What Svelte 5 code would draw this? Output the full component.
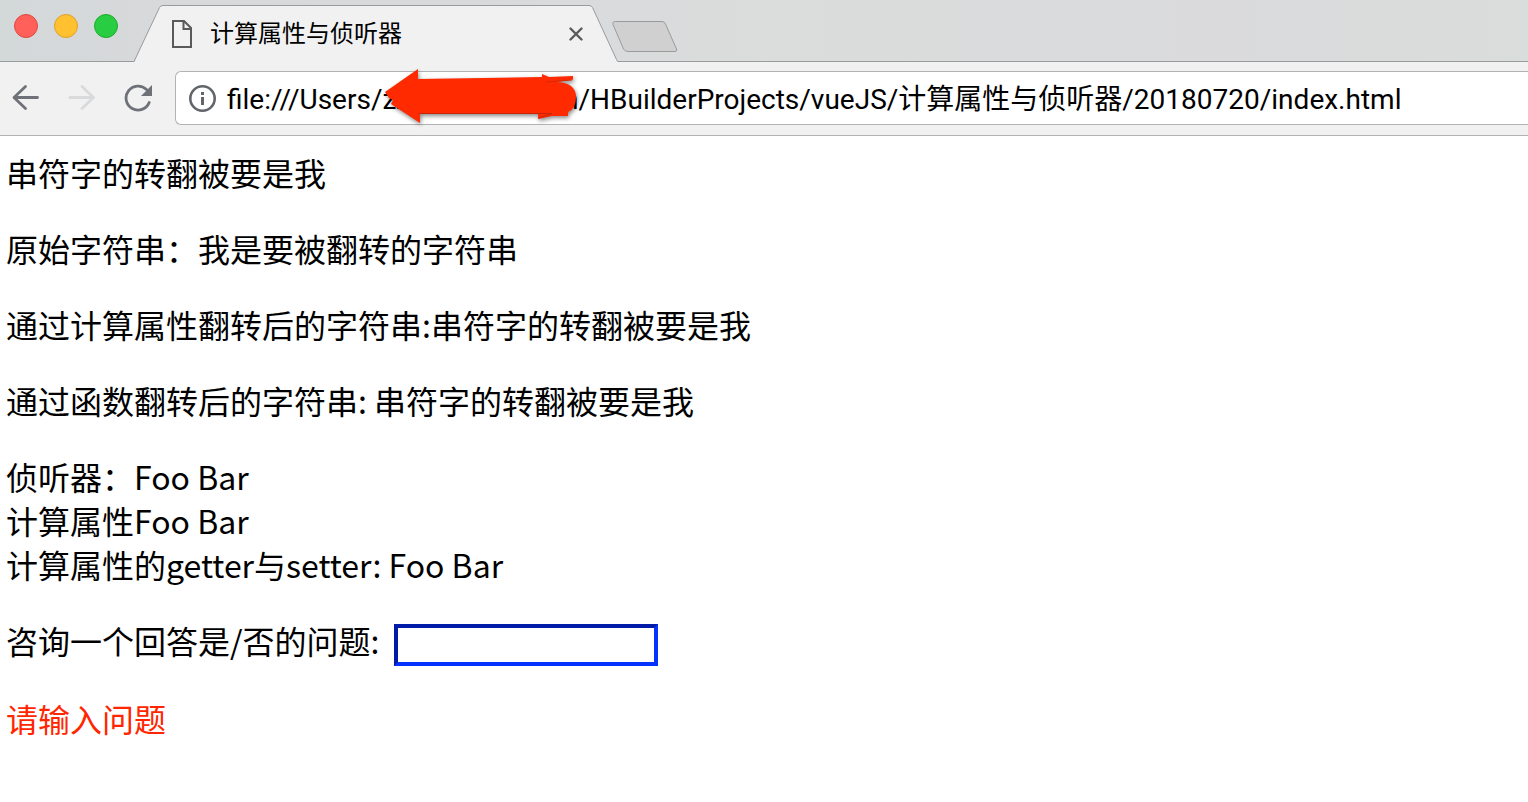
<script>
  let url = 'file:///Users/zxxxxxxxxxxxxn/HBuilderProjects/vueJS/计算属性与侦听器/20180720/index.html'
  let message = '我是要被翻转的字符串'
  let firstName = 'Foo'
  let lastName = 'Bar'
  let question = ''
  let answer = '请输入问题'

  const reverse = (text) => text.split('').reverse().join('')

  $: reversed = reverse(message)
  $: fullName = firstName + ' ' + lastName
</script>

<div class="browser">
  <header class="strip">
    <div class="lights">
      <button class="light close" aria-label="Close window"></button>
      <button class="light minimize" aria-label="Minimize window"></button>
      <button class="light zoom" aria-label="Zoom window"></button>
    </div>
    <div class="tab">
      <svg class="shape" width="484" height="57" viewBox="0 0 484 57" aria-hidden="true">
        <path d="M0 57 L0.5 56.5 L25.5 2.5 Q26.5 0.5 29 0.5 H455 Q457.5 0.5 458.5 2.5 L482.5 54.5 Q483.3 56.5 484 56.5 V57 Z" fill="#f1f1f1" />
        <path d="M0 56.5 L25.5 2.5 Q26.5 0.5 29 0.5 H455 Q457.5 0.5 458.5 2.5 L482.5 54.5 Q483.3 56.5 484 56.5" fill="none" stroke="#999b9d" />
      </svg>
      <svg class="file" width="20" height="28" viewBox="0 0 20 28" aria-hidden="true">
        <path d="M1 1 H12 L19 8 V27 H1 Z M11.5 1 V9 H19" fill="none" stroke="#5a5a5a" stroke-width="2" />
      </svg>
      <span class="title">计算属性与侦听器</span>
      <button class="tab-close" aria-label="Close tab">
        <svg width="14" height="14" viewBox="0 0 14 14">
          <path d="M1.5 1.5 L12.5 12.5 M12.5 1.5 L1.5 12.5" stroke="#5a5b5e" stroke-width="2.4" stroke-linecap="round" />
        </svg>
      </button>
    </div>
    <button class="new-tab" aria-label="New tab">
      <svg width="66" height="32" viewBox="0 0 66 32">
        <path d="M3.5 0.5 H50 Q52.5 0.5 53.5 3 L64.5 28 Q65.5 30.5 63 30.5 H16 Q13 30.5 11.5 28 L1 3.5 Q0 0.5 3.5 0.5 Z" fill="#d0d0d0" stroke="#999b9d" />
      </svg>
    </button>
  </header>

  <nav class="toolbar">
    <button class="nav" aria-label="Back">
      <svg width="28" height="28" viewBox="0 0 28 28">
        <path d="M13.5 2.5 L2 13.5 L13.5 24.5 M2.5 13.5 H25.5" fill="none" stroke="#6e7278" stroke-width="2.8" stroke-linecap="round" stroke-linejoin="round" />
      </svg>
    </button>
    <button class="nav" aria-label="Forward" disabled>
      <svg width="28" height="28" viewBox="0 0 28 28">
        <path d="M14 2.5 L25.5 13.5 L14 24.5 M25 13.5 H2" fill="none" stroke="#d8dadb" stroke-width="2.8" stroke-linecap="round" stroke-linejoin="round" />
      </svg>
    </button>
    <button class="nav" aria-label="Reload">
      <svg width="28" height="28" viewBox="0 0 28 28">
        <path d="M22.5 5.5 A12 12 0 1 0 25.2 18.5" fill="none" stroke="#6e7278" stroke-width="2.8" stroke-linecap="round" />
        <path d="M28 1 V12 H17 Z" fill="#6e7278" />
      </svg>
    </button>
    <div class="address">
      <svg class="info" width="28" height="28" viewBox="0 0 28 28" aria-hidden="true">
        <circle cx="13.5" cy="14.5" r="12.2" fill="none" stroke="#62666b" stroke-width="2.6" />
        <path d="M12 8 H15 V11 H12 Z M12 13 H15 V21 H12 Z" fill="#62666b" />
      </svg>
      <input class="url" type="text" aria-label="Address" spellcheck="false" bind:value={url} />
      <!-- hides the account name in the path -->
      <svg class="marker" width="200" height="60" viewBox="0 0 200 60" aria-hidden="true">
        <path d="M1 26 L34 3 V13 L158 11 V8 L165 11 L189 10 V13.5 L173 16 Q192 17 192 31 Q192 43 184 46 V50 H168 L154 53 V47.5 L36 47.5 V57 L7 38 L9 34 L5 32 Z" fill="#ff2a00" />
        <path d="M34 47.5 H168 L155 52" fill="none" stroke="#c92500" />
        <path d="M162 16 L188 14" fill="none" stroke="#d92800" />
      </svg>
    </div>
  </nav>

  <main>
    <p>{reversed}</p>
    <p>原始字符串：{message}</p>
    <p>通过计算属性翻转后的字符串:{reversed}</p>
    <p>通过函数翻转后的字符串: {reverse(message)}</p>
    <div class="names">
      <div>侦听器：{fullName}</div>
      <div>计算属性{fullName}</div>
      <div>计算属性的getter与setter: {fullName}</div>
    </div>
    <p class="ask">
      <label for="question">咨询一个回答是/否的问题:</label>
      <input id="question" type="text" bind:value={question} />
    </p>
    <p class="answer">{answer}</p>
  </main>
</div>

<style>
  :global(body) {
    margin: 0;
    background: #fff;
  }
  .browser {
    overflow: hidden;
    color: #000;
    font-family: 'Noto Sans CJK SC', sans-serif;
  }
  button {
    display: flex;
    padding: 0;
    border: 0;
    background: none;
  }

  .strip {
    display: flex;
    align-items: flex-start;
    height: 61px;
    border-bottom: 1px solid #999b9d;
    background: linear-gradient(90deg, #d3d8d9, #d8d9db 12%, #d9dadc 36%, #dadddc 50%, #dadadc 80%, #d9dddb);
  }
  .lights {
    display: flex;
    gap: 16px;
    width: 120px;
    padding: 14px 0 0 14px;
  }
  .light {
    width: 24px;
    height: 24px;
    box-sizing: border-box;
    border-radius: 50%;
  }
  .close {
    border: 1px solid #e2463f;
    background: #ff6059;
  }
  .minimize {
    border: 1px solid #e0a029;
    background: #ffc130;
  }
  .zoom {
    border: 1px solid #1bac2c;
    background: #28cd41;
  }
  .tab {
    position: relative;
    display: flex;
    align-items: center;
    box-sizing: border-box;
    width: 484px;
    height: 57px;
    margin-top: 5px;
    padding: 0 35px 0 38px;
  }
  .shape {
    position: absolute;
    top: 0;
    left: 0;
  }
  .file,
  .title,
  .tab-close {
    position: relative;
  }
  .title {
    flex: 1;
    margin-left: 18px;
    padding-bottom: 3px;
    font-size: 24px;
    line-height: 32px;
  }
  .new-tab {
    margin: 21px 0 0 -6px;
  }

  .toolbar {
    display: flex;
    align-items: center;
    padding: 9px 0 10px 12px;
    border-bottom: 1px solid #b3b3b3;
    background: #f1f1f1;
  }
  .nav {
    margin-right: 28px;
  }
  .address {
    position: relative;
    display: flex;
    flex: 1;
    align-items: center;
    height: 52px;
    margin-left: -5px;
    padding-left: 13px;
    border: 1px solid #b3b3b3;
    border-right: 0;
    border-radius: 6px 0 0 6px;
    background: #fff;
  }
  .url {
    flex: 1;
    min-width: 0;
    margin-left: 10px;
    padding: 3px 0 0;
    border: 0;
    outline: 0;
    background: none;
    color: #000;
    font: 28px/40px Roboto, 'Noto Sans CJK SC', sans-serif;
  }
  .marker {
    position: absolute;
    top: -6px;
    left: 208px;
    filter: drop-shadow(1px 2px 2px #0007);
  }

  main {
    padding: 14px 6px;
    font-size: 32px;
    line-height: 44px;
  }
  p {
    margin: 0 0 32px;
  }
  .names {
    margin-bottom: 32px;
  }
  .ask {
    display: flex;
    align-items: flex-end;
    gap: 15px;
    height: 48px;
    margin-bottom: 30px;
  }
  .ask label {
    align-self: flex-start;
  }
  .ask input {
    box-sizing: border-box;
    width: 264px;
    height: 42px;
    padding: 2px 4px;
    border: 4px solid;
    border-color: #001ba8 #0433ff #0433ff #001ba8;
    outline: 0;
    font: inherit;
  }
  .answer {
    margin-bottom: 0;
    color: #ff2600;
  }
</style>
